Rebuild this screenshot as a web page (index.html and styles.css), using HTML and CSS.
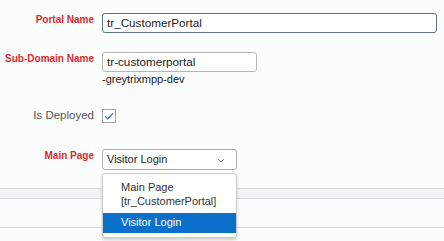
FILE: index.html
```html
<!DOCTYPE html>
<html lang="en">
<head>
    <meta charset="UTF-8">
    <title>Portal Settings</title>
    <link rel="stylesheet" href="styles.css">
</head>
<body>
    <div class="page">
        <div class="form">
            <div class="row">
                <label class="label required">Portal Name</label>
                <div class="field">
                    <div class="input input-wide input-focus">tr_CustomerPortal</div>
                </div>
            </div>

            <div class="row row-subdomain">
                <label class="label required">Sub-Domain Name</label>
                <div class="field">
                    <div class="input input-short">tr-customerportal</div>
                    <div class="help">-greytrixmpp-dev</div>
                </div>
            </div>

            <div class="row row-check">
                <label class="label plain">Is Deployed</label>
                <div class="field">
                    <span class="checkbox">
                        <svg width="12" height="12" viewBox="0 0 12 12">
                            <path d="M2.2 6.4 L4.8 8.9 L10 3.2" fill="none" stroke="#3a78bf" stroke-width="1.3"/>
                        </svg>
                    </span>
                </div>
            </div>

            <div class="row row-select">
                <label class="label required">Main Page</label>
                <div class="field">
                    <div class="select">
                        <span>Visitor Login</span>
                        <svg class="chevron" width="8" height="5" viewBox="0 0 8 5">
                            <path d="M1 1 L4 4 L7 1" fill="none" stroke="#888" stroke-width="1"/>
                        </svg>
                    </div>
                    <ul class="dropdown">
                        <li class="option">Main Page [tr_CustomerPortal]</li>
                        <li class="option option-active">Visitor Login</li>
                    </ul>
                </div>
            </div>
        </div>

        <div class="section">
            <div class="section-band"></div>
            <div class="section-row"></div>
        </div>
    </div>
</body>
</html>
```

FILE: styles.css
```css
body {
    margin: 0;
    font-family: "Liberation Sans", Arial, sans-serif;
    background-color: #fbfcfc;
    color: #222;
}
.page {
    width: 444px;
    height: 241px;
    overflow: hidden;
}
.form {
    padding-top: 13px;
}
.row {
    display: grid;
    grid-template-columns: 94px 1fr;
    column-gap: 8px;
}
.row-subdomain {
    margin-top: 19px;
}
.row-check {
    margin-top: 22px;
}
.row-select {
    margin-top: 26px;
}
.label {
    text-align: right;
    white-space: nowrap;
}
.label.required {
    font-size: 10px;
    font-weight: bold;
    line-height: 12px;
    padding-top: 1px;
    color: #db2a2f;
}
.label.plain {
    font-size: 11.5px;
    line-height: 14px;
    color: #555;
}
.field {
    position: relative;
}
.input {
    box-sizing: border-box;
    height: 20px;
    padding: 0 4px;
    border: 1px solid #b4b6b7;
    border-radius: 3px;
    background-color: #fff;
    font-size: 11.7px;
    line-height: 18px;
    color: #222;
}
.input-wide {
    width: 335px;
}
.input-short {
    width: 155px;
}
.input-focus {
    border-color: #5f777b;
}
.help {
    margin-top: 1px;
    font-size: 11px;
    line-height: 13px;
    color: #222;
}
.checkbox {
    display: flex;
    align-items: center;
    justify-content: center;
    box-sizing: border-box;
    width: 14px;
    height: 14px;
    margin-top: 1px;
    border: 1px solid #9fa3a6;
    background-color: #fff;
}
.select {
    display: flex;
    align-items: center;
    justify-content: space-between;
    box-sizing: border-box;
    width: 135px;
    height: 21px;
    padding: 0 11px 0 4px;
    border: 1px solid #a9abad;
    border-radius: 3px;
    background-color: #fff;
    font-size: 11px;
    line-height: 13px;
    color: #222;
}
.chevron {
    margin-top: 1px;
}
.dropdown {
    position: absolute;
    top: 24px;
    left: 0;
    z-index: 2;
    box-sizing: border-box;
    width: 135px;
    margin: 0;
    padding: 0 0 4px;
    list-style: none;
    border: 1px solid #c9cbcc;
    border-radius: 3px;
    background-color: #fff;
    box-shadow: 0 2px 3px rgba(0, 0, 0, 0.18);
    font-size: 11px;
    line-height: 14px;
    color: #333;
}
.option {
    padding: 6px 8px 5px 18px;
}
.option-active {
    padding: 2px 8px 4px 18px;
    background-color: #0a70c9;
    color: #fff;
}
.section {
    margin-top: 18px;
}
.section-band {
    height: 9px;
    border-top: 1px solid #d6d9da;
    border-bottom: 1px solid #d6d9da;
    background-color: #f1f3f4;
}
.section-row {
    height: 28px;
    border-bottom: 1px solid #d6d9da;
}
```
